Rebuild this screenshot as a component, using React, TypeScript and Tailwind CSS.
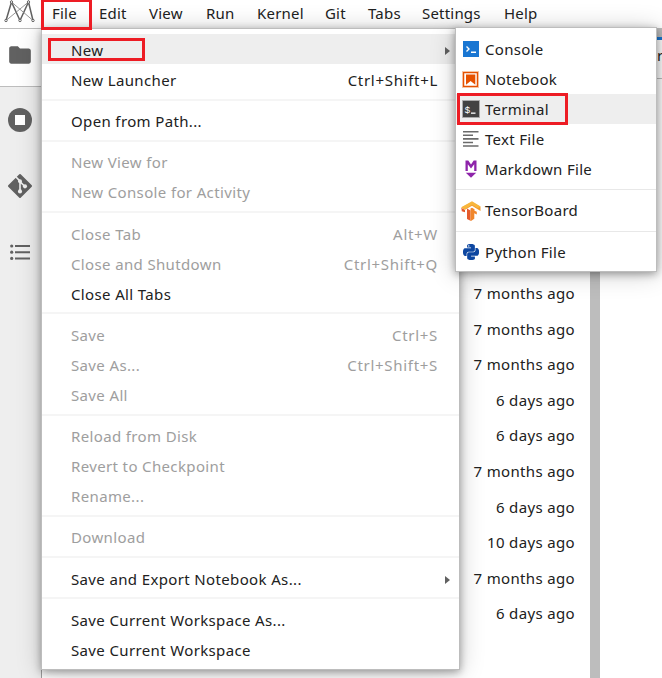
import clsx from "clsx";

type Item = {
  label: string;
  keys?: string;
  disabled?: boolean;
  active?: boolean;
  submenu?: boolean;
};

const MENUS = [
  { label: "Edit", width: "w-[50px]" },
  { label: "View", width: "w-[57px]" },
  { label: "Run", width: "w-[51px]" },
  { label: "Kernel", width: "w-[68px]" },
  { label: "Git", width: "w-[43px]" },
  { label: "Tabs", width: "w-[54px]" },
  { label: "Settings", width: "w-[82px]" },
  { label: "Help", width: "w-[60px]" },
];

const FILE_GROUPS: Item[][] = [
  [
    { label: "New", active: true, submenu: true },
    { label: "New Launcher", keys: "Ctrl+Shift+L" },
  ],
  [{ label: "Open from Path..." }],
  [
    { label: "New View for", disabled: true },
    { label: "New Console for Activity", disabled: true },
  ],
  [
    { label: "Close Tab", keys: "Alt+W", disabled: true },
    { label: "Close and Shutdown", keys: "Ctrl+Shift+Q", disabled: true },
    { label: "Close All Tabs" },
  ],
  [
    { label: "Save", keys: "Ctrl+S", disabled: true },
    { label: "Save As...", keys: "Ctrl+Shift+S", disabled: true },
    { label: "Save All", disabled: true },
  ],
  [
    { label: "Reload from Disk", disabled: true },
    { label: "Revert to Checkpoint", disabled: true },
    { label: "Rename...", disabled: true },
  ],
  [{ label: "Download", disabled: true }],
  [{ label: "Save and Export Notebook As...", submenu: true }],
  [{ label: "Save Current Workspace As..." }, { label: "Save Current Workspace" }],
];

const MODIFIED = [
  "7 months ago",
  "7 months ago",
  "7 months ago",
  "6 days ago",
  "6 days ago",
  "7 months ago",
  "6 days ago",
  "10 days ago",
  "7 months ago",
  "6 days ago",
];

function Logo() {
  return (
    <svg className="h-[24px] w-[36px]" viewBox="0 0 36 24" fill="none" stroke="#616161">
      <path strokeWidth="1.500" d="M6 20.500 11.500 2 20 20.500 28.500 2 33 20.500" />
      <path strokeWidth=".9" stroke="#8a8a8a" d="M6 20.500 28.500 2M11.500 2 33 20.500" />
      <g strokeWidth="1" fill="#fff">
        <circle cx="6" cy="20.500" r="1.200" />
        <circle cx="20" cy="20.500" r="1.200" />
        <circle cx="33" cy="20.500" r="1.200" />
        <circle cx="11.500" cy="2" r="1.200" />
        <circle cx="28.500" cy="2" r="1.200" />
      </g>
    </svg>
  );
}

function FolderIcon() {
  return (
    <svg className="h-[26px] w-[26px]" viewBox="0 0 24 24" fill="#616161">
      <path d="M10 4H4c-1.100 0-2 .9-2 2v12c0 1.100.9 2 2 2h16c1.100 0 2-.9 2-2V8c0-1.100-.9-2-2-2h-8z" />
    </svg>
  );
}

function RunningIcon() {
  return (
    <svg className="size-[24px]" viewBox="0 0 24 24">
      <circle cx="12" cy="12" r="12" fill="#616161" />
      <path d="M7 7h10v10H7z" fill="#fff" />
    </svg>
  );
}

function GitIcon() {
  return (
    <svg className="size-[26px]" viewBox="0 0 24 24" fill="none">
      <path
        d="M12 1.800 22.200 12 12 22.200 1.800 12z"
        fill="#616161"
        stroke="#616161"
        strokeWidth="1.800"
        strokeLinejoin="round"
      />
      <path d="m7.800 3.200 4.200 4.300V17M12 8l4.500 4.500" stroke="#eee" strokeWidth="1.500" />
      <g fill="#eee">
        <circle cx="12" cy="7.500" r="1.800" />
        <circle cx="12" cy="17" r="1.900" />
        <circle cx="16.600" cy="12.300" r="1.900" />
      </g>
    </svg>
  );
}

function TocIcon() {
  return (
    <svg className="h-[16px] w-[20px]" viewBox="0 0 20 16" fill="#616161">
      <circle cx="1.700" cy="2" r="1.600" />
      <circle cx="1.700" cy="8.200" r="1.600" />
      <circle cx="1.700" cy="14.400" r="1.600" />
      <path d="M5 1h15v2H5zM5 7.200h15v2H5zM5 13.400h15v2H5z" />
    </svg>
  );
}

function ConsoleIcon() {
  return (
    <svg className="size-[16px]" viewBox="0 0 16 16">
      <path d="M0 0h16v16H0z" fill="#1976d2" />
      <path d="m3.500 5.500 2.500 2.500-2.500 2.500" stroke="#fff" strokeWidth="1.400" fill="none" />
      <path d="M8 10.500h5V12H8z" fill="#fff" />
    </svg>
  );
}

function NotebookIcon() {
  return (
    <svg className="size-[17px]" viewBox="0 0 17 17">
      <path d="M0 0h17v17H0z" fill="#f7c5a5" />
      <path d="M1.600 1.600h13.800v13.800H1.600z" fill="#fff" stroke="#e65100" strokeWidth="1.300" />
      <path d="M4 3.600h9.300v10.200L8.600 10 4 13.800z" fill="#e65100" />
    </svg>
  );
}

function TerminalIcon() {
  return (
    <svg className="size-[18px]" viewBox="0 0 18 18">
      <path d="M.5.500h17v17H.5z" fill="#424242" stroke="#aaa" />
      <text x="2.800" y="13" fill="#fff" fontSize="9.500" fontFamily="Liberation Sans, sans-serif">
        $
      </text>
      <path d="M9 12.500h4.500v1.300H9z" fill="#fff" />
    </svg>
  );
}

function TextIcon() {
  return (
    <svg className="size-[16px]" viewBox="0 0 16 16" fill="#6b6b6b">
      <path d="M0 0h15.500v1.500H0zM0 3.500h10v1.500H0zM0 7h15.500v1.700H0zM0 10.700h10v1.600H0zM0 14.200h15.500v1.600H0z" />
    </svg>
  );
}

function MarkdownIcon() {
  return (
    <svg className="h-[18px] w-[12px]" viewBox="0 0 12 18" fill="#8e24aa">
      <path d="M.5 11V.5h2.800L6 4.500 8.700.5h2.800V11H9.200V4.300L6 8.500 2.800 4.300V11zM.8 12.700h10.400L6 17.700z" />
    </svg>
  );
}

function TensorIcon() {
  return (
    <svg className="h-[20px] w-[20px]" viewBox="0 0 20 20">
      <path d="M.3 6.800 4 9v2.300L.8 10.300z" fill="#e55b2d" />
      <path d="m4 8.700 7-3.900 8.500 5.200V5.800L11 1 .3 6.600z" fill="#f29a2e" />
      <path d="M6 7.500 9.500 9.500v10.300L6 18z" fill="#e55b2d" />
      <path d="M9.500 7.500 11 6.700l2.500 1.500v1.600l2.300 1v2.800l-2.500-1.300v5.500l-3.800 2.500z" fill="#f0862b" />
      <path d="m.3 6.300 10.700-6 8.700 5.300-3 1.600-5.700-3.500L4 8.300z" fill="#f8b63c" />
    </svg>
  );
}

function PythonIcon() {
  return (
    <svg className="size-[16px]" viewBox="0 0 24 24" fill="#0d47a1">
      <path d="M14.250.180l.9.200.73.260.590.300.450.320.340.340.250.340.160.330.100.300.040.260.020.200-.010.130V8.500l-.050.630-.130.550-.210.460-.260.380-.300.310-.330.250-.350.190-.350.140-.330.100-.300.070-.260.040-.210.020H8.770l-.690.050-.590.140-.500.220-.410.270-.330.320-.270.350-.200.360-.150.370-.100.350-.070.320-.040.270-.020.210v3.060H3.170l-.210-.030-.280-.070-.320-.120-.350-.180-.360-.260-.360-.360-.350-.460-.320-.590-.280-.730-.210-.880-.140-1.050-.050-1.230.060-1.220.160-1.040.240-.870.320-.710.360-.570.400-.440.420-.330.420-.240.400-.160.360-.100.320-.050.240-.010h.160l.060.010h8.160v-.830H6.180l-.010-2.750-.020-.370.050-.340.110-.310.170-.280.250-.260.310-.230.380-.200.440-.180.510-.150.580-.120.640-.100.710-.060.770-.040.840-.020 1.270.050zm-6.300 1.980l-.230.330-.080.410.080.410.230.340.330.220.410.090.410-.090.330-.220.230-.340.080-.410-.080-.410-.230-.330-.330-.220-.410-.090-.410.090z" />
      <path d="M21.100 6.110l.280.060.320.120.350.180.360.270.360.350.350.470.320.590.280.730.210.880.140 1.040.050 1.230-.060 1.230-.160 1.040-.240.860-.320.710-.360.570-.400.450-.420.330-.420.240-.400.160-.360.090-.320.050-.240.020-.160-.010h-8.220v.820h5.840l.010 2.760.020.360-.050.340-.110.310-.170.290-.250.250-.310.240-.380.200-.440.170-.510.150-.580.130-.640.090-.710.070-.770.040-.840.010-1.270-.040-1.070-.140-.900-.200-.730-.250-.590-.300-.450-.330-.340-.340-.250-.340-.160-.330-.100-.300-.040-.250-.020-.200.010-.130v-5.340l.050-.640.130-.540.210-.460.260-.380.300-.320.330-.240.350-.200.350-.140.330-.100.300-.060.260-.040.210-.020.130-.010h5.840l.690-.050.590-.140.500-.210.410-.280.330-.320.270-.350.200-.360.150-.360.100-.350.070-.320.040-.280.020-.210V6.070h2.090l.140.010z" />
    </svg>
  );
}

const NEW_GROUPS = [
  [
    { label: "Console", icon: ConsoleIcon },
    { label: "Notebook", icon: NotebookIcon },
    { label: "Terminal", icon: TerminalIcon, active: true },
    { label: "Text File", icon: TextIcon },
    { label: "Markdown File", icon: MarkdownIcon },
  ],
  [{ label: "TensorBoard", icon: TensorIcon }],
  [{ label: "Python File", icon: PythonIcon }],
];

function Arrow() {
  return (
    <svg className="mt-[2px] mr-[9px] h-[8px] w-[5px]" viewBox="0 0 5 8" fill="#616161">
      <path d="M0 0v8l5-4z" />
    </svg>
  );
}

function MenuBar() {
  return (
    <header className="flex h-[29px] border-b border-[#bdbdbd] bg-white tracking-[0.2px]">
      <div className="w-[42px]">
        <Logo />
      </div>
      <div className="relative w-[49px] border-r-2 border-[#bdbdbd] pl-[10px] leading-[27px]">
        File
        <div className="absolute -top-px -left-px z-30 h-[31px] w-[51px] border-3 border-[#ed1c24]" />
      </div>
      {MENUS.map((menu) => (
        <div key={menu.label} className={clsx("shrink-0 pl-[8px] leading-[27px]", menu.width)}>
          {menu.label}
        </div>
      ))}
    </header>
  );
}

function SideBar() {
  return (
    <aside className="flex w-[41px] shrink-0 flex-col items-center bg-[#eee] pr-[2px]">
      <div className="-mr-[2px] flex h-[58px] w-[41px] items-center justify-center border-b border-[#bdbdbd] bg-white pr-[2px] pb-[5px]">
        <FolderIcon />
      </div>
      <div className="mt-[21px]">
        <RunningIcon />
      </div>
      <div className="mt-[41px]">
        <GitIcon />
      </div>
      <div className="mt-[45px]">
        <TocIcon />
      </div>
    </aside>
  );
}

function FileMenu() {
  return (
    <div className="absolute top-[28px] left-[41px] z-10 h-[642px] w-[419px] border border-[#bdbdbd] bg-white pt-[5px] shadow-[0_2px_8px_rgba(0,0,0,0.35),0_2px_24px_rgba(0,0,0,0.2)]">
      {FILE_GROUPS.map((group, i) => (
        <div key={i}>
          {i > 0 && (
            <div className="flex h-[11.250px] items-center">
              <div className="h-[2px] w-full bg-[#f5f5f5]" />
            </div>
          )}
          {group.map((item) => (
            <div
              key={item.label}
              className={clsx(
                "flex h-[30px] items-center pt-[2px] pl-[29px]",
                item.active && "bg-[#eee]",
                item.disabled && "text-[#9e9e9e]",
              )}
            >
              <span className="flex-1 tracking-[0.36px]">{item.label}</span>
              {item.keys && <span className="mr-[21px] tracking-[0.7px]">{item.keys}</span>}
              {item.submenu && <Arrow />}
            </div>
          ))}
        </div>
      ))}
      <div className="absolute top-[9px] left-[6px] h-[23px] w-[97px] border-3 border-[#ed1c24]" />
    </div>
  );
}

function NewMenu() {
  return (
    <div className="absolute top-[27px] left-[455px] z-20 h-[245px] w-[202px] border border-[#bdbdbd] bg-white pt-[6px] shadow-[0_2px_8px_rgba(0,0,0,0.35),0_2px_24px_rgba(0,0,0,0.2)]">
      {NEW_GROUPS.map((group, i) => (
        <div key={i}>
          {i > 0 && (
            <div className="flex h-[11.500px] items-center">
              <div className="h-px w-full bg-[#e8e8e8]" />
            </div>
          )}
          {group.map(({ label, icon: Icon, active }: any) => (
            <div key={label} className={clsx("flex h-[30px] items-center tracking-[0.3px]", active && "bg-[#eee]")}>
              <span className="flex w-[29px] justify-center">
                <Icon />
              </span>
              {label}
            </div>
          ))}
        </div>
      ))}
      <div className="absolute top-[65px] left-px h-[32px] w-[111px] border-3 border-[#ed1c24]" />
    </div>
  );
}

export default function App() {
  return (
    <div className="relative flex h-[678px] w-[662px] flex-col overflow-hidden bg-white font-['Noto_Sans',sans-serif] text-[15px] whitespace-nowrap text-[#212121]">
      <MenuBar />
      <div className="flex min-h-0 flex-1">
        <SideBar />
        <main className="flex w-[549px] flex-col items-end border-l border-[#9e9e9e] pt-[247px] pr-[15px] tracking-[0.35px]">
          {MODIFIED.map((time, i) => (
            <div key={i} className="h-[35.600px] leading-[35.600px]">
              {time}
            </div>
          ))}
        </main>
        <div className="w-[10px] bg-[#bdbdbd]" />
        <section className="flex-1 overflow-hidden">
          <div className="h-[8px] bg-[#bdbdbd]" />
          <div className="h-[42px] border-t-3 border-b border-t-[#1976d2] border-b-[#bdbdbd] pt-[4px] pl-[57px]">r</div>
        </section>
      </div>
      <FileMenu />
      <NewMenu />
    </div>
  );
}
